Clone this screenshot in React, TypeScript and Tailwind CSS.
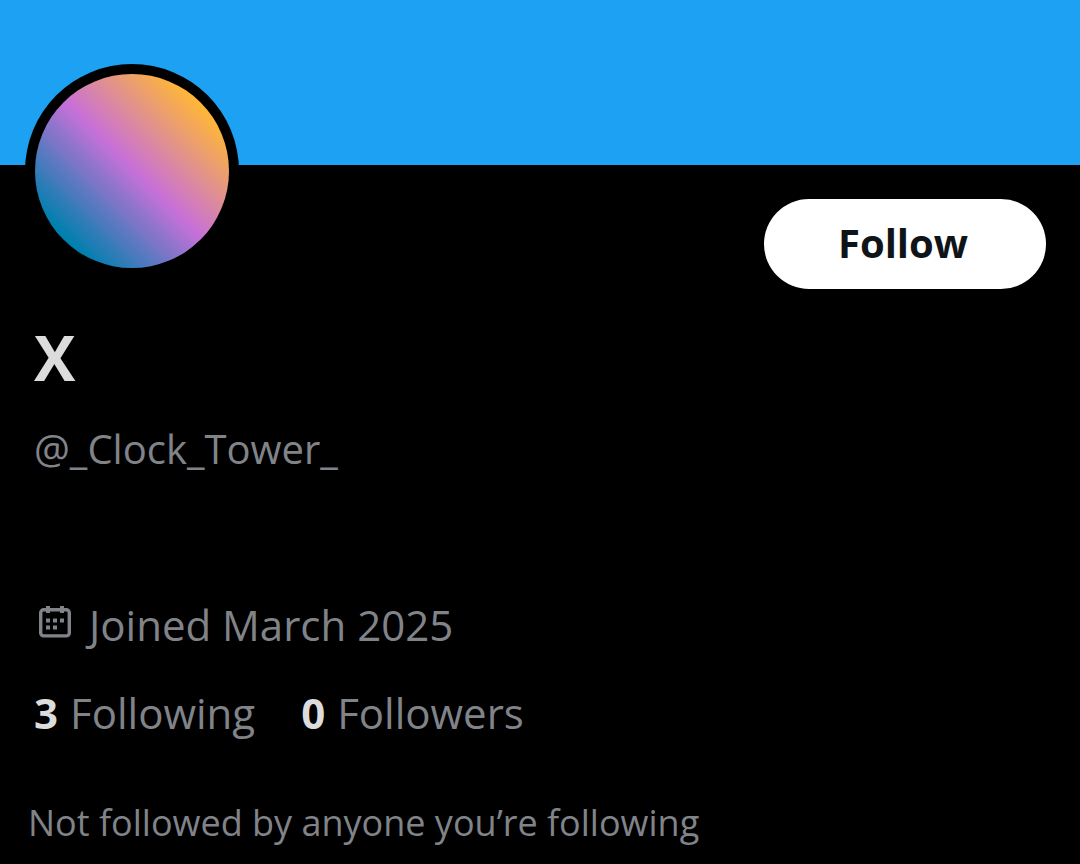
import React from 'react';

interface StatProps {
  count: number;
  label: string;
}

const Stat: React.FC<StatProps> = ({ count, label }) => (
  <a href="#" className="flex gap-3">
    <span className="font-bold text-[#dcdcdc]">{count}</span>
    <span>{label}</span>
  </a>
);

const CalendarIcon: React.FC = () => (
  <svg viewBox="0 0 36 36" className="-mt-1 h-9 w-9" fill="none" aria-hidden="true">
    <rect x="3.7" y="4.7" width="28.6" height="26.2" rx="3" stroke="currentColor" strokeWidth="3.4" />
    <path d="M11 1v7M25 1v7" stroke="currentColor" strokeWidth="4" />
    <path
      d="M9 13.5h4v4H9zM16 13.5h4v4h-4zM23 13.5h4v4h-4zM9 20.5h4v4H9zM16 20.5h4v4h-4z"
      fill="currentColor"
    />
  </svg>
);

export default function App() {
  return (
    <div className="min-h-screen bg-black font-['Open_Sans',sans-serif] text-[#808489]">
      {/* Banner */}
      <div className="h-[165px] bg-[#1da1f2]"></div>

      <main className="px-[34px]">
        <header className="flex items-start justify-between">
          <div className="relative -ml-[9px] -mt-[101px] h-[214px] w-[214px] rounded-full bg-black p-[10px]">
            <div className="h-full w-full rounded-full bg-[linear-gradient(45deg,#0080ae_16%,#c870d8_51%,#ffb735_85%)]"></div>
          </div>
          <button
            type="button"
            className="mt-[34px] h-[90px] w-[282px] rounded-full bg-white pb-0.5 pr-1 text-[40px] font-bold leading-[56px] text-[#0f1419]"
          >
            Follow
          </button>
        </header>

        <h1 className="mt-8 text-[62px] font-bold leading-[72px] text-[#dcdcdc]">X</h1>
        <p className="mt-7 text-[40px] leading-[56px]">@_Clock_Tower_</p>

        <p className="mt-[120px] flex items-center gap-4 pl-[3px] text-[42px] leading-[56px]">
          <CalendarIcon />
          Joined March 2025
        </p>
        <div className="mt-8 flex gap-[46px] text-[42px] leading-[56px]">
          <Stat count={3} label="Following" />
          <Stat count={0} label="Followers" />
        </div>
      </main>

      <p className="mt-14 px-7 text-[36px] leading-[52px]">Not followed by anyone you’re following</p>
    </div>
  );
}
